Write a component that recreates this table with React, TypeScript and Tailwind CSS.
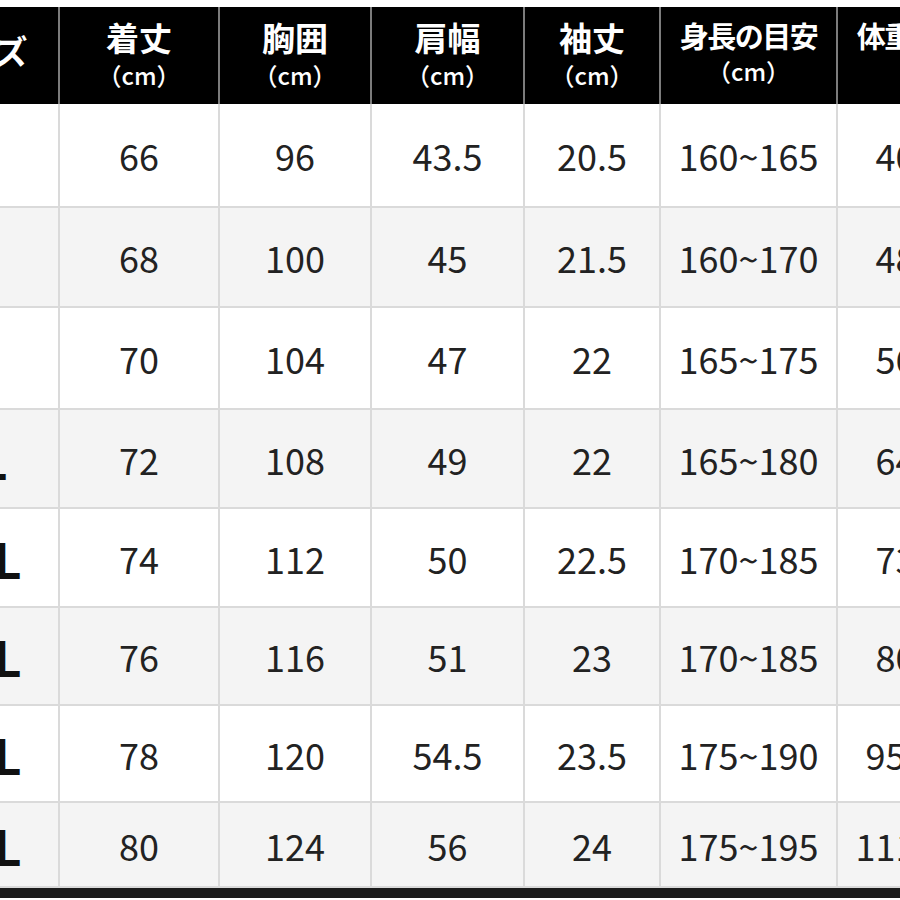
import React from "react";

const columns = [
  { label: "サイズ", unit: "", width: "w-[161px]" },
  { label: "着丈", unit: "（cm）", width: "w-[160px]" },
  { label: "胸囲", unit: "（cm）", width: "w-[152px]" },
  { label: "肩幅", unit: "（cm）", width: "w-[153px]" },
  { label: "袖丈", unit: "（cm）", width: "w-[136px]" },
  { label: "身長の目安", unit: "（cm）", width: "w-[177px]" },
  { label: "体重の目安", unit: "（kg）", width: "w-[177px]" },
];

const rows = [
  { size: "S", h: "h-[104px]", bg: "bg-white", values: ["66", "96", "43.5", "20.5", "160~165", "40~48"] },
  { size: "M", h: "h-[100px]", bg: "bg-[#f4f4f4]", values: ["68", "100", "45", "21.5", "160~170", "48~56"] },
  { size: "L", h: "h-[102px]", bg: "bg-white", values: ["70", "104", "47", "22", "165~175", "56~64"] },
  { size: "XL", h: "h-[99px]", bg: "bg-[#f4f4f4]", values: ["72", "108", "49", "22", "165~180", "64~73"] },
  { size: "2XL", h: "h-[99px]", bg: "bg-white", values: ["74", "112", "50", "22.5", "170~185", "73~80"] },
  { size: "3XL", h: "h-[98px]", bg: "bg-[#f4f4f4]", values: ["76", "116", "51", "23", "170~185", "80~95"] },
  { size: "4XL", h: "h-[97px]", bg: "bg-white", values: ["78", "120", "54.5", "23.5", "175~190", "95~111"] },
  { size: "5XL", h: "h-[85px]", bg: "bg-[#f4f4f4]", values: ["80", "124", "56", "24", "175~195", "111~125"] },
];

export default function App() {
  return (
    <div
      className="w-[900px] h-[900px] overflow-hidden bg-white pt-[7px]"
      style={{ fontFamily: '"Noto Sans CJK JP", "Noto Sans", sans-serif' }}
    >
      <div className="-ml-[101px] w-[1116px] flex flex-col">
        {/* header */}
        <div className="flex h-[97px] bg-black">
          {columns.map((col) => (
            <div
              key={col.label}
              className={`${col.width} shrink-0 border-r-2 border-[#7c7c7c] flex flex-col items-center text-white ${
                col.unit ? "pt-[14px]" : "justify-center pb-[10px]"
              }`}
            >
              <span
                className={`font-bold leading-none ${
                  col.label.length > 3 ? "text-[29px] tracking-[-1.5px]" : "text-[33px]"
                }`}
              >
                {col.label}
              </span>
              {col.unit && (
                <span className="mt-[9px] text-[24px] font-medium leading-none">{col.unit}</span>
              )}
            </div>
          ))}
        </div>

        {/* body */}
        {rows.map((row) => (
          <div key={row.size} className={`flex ${row.h} ${row.bg} border-b-2 border-[#dadada]`}>
            <div className="w-[161px] shrink-0 border-r-2 border-[#dadada] flex items-center justify-center text-[48px] font-bold text-[#111] leading-none">
              {row.size}
            </div>
            {row.values.map((v, i) => (
              <div
                key={i}
                className={`${columns[i + 1].width} shrink-0 border-r-2 border-[#dadada] flex items-center justify-center text-[36px] text-[#222] leading-none`}
              >
                {v}
              </div>
            ))}
          </div>
        ))}

        <div className="h-[10px] bg-[#1b1b1b]" />
      </div>
    </div>
  );
}
